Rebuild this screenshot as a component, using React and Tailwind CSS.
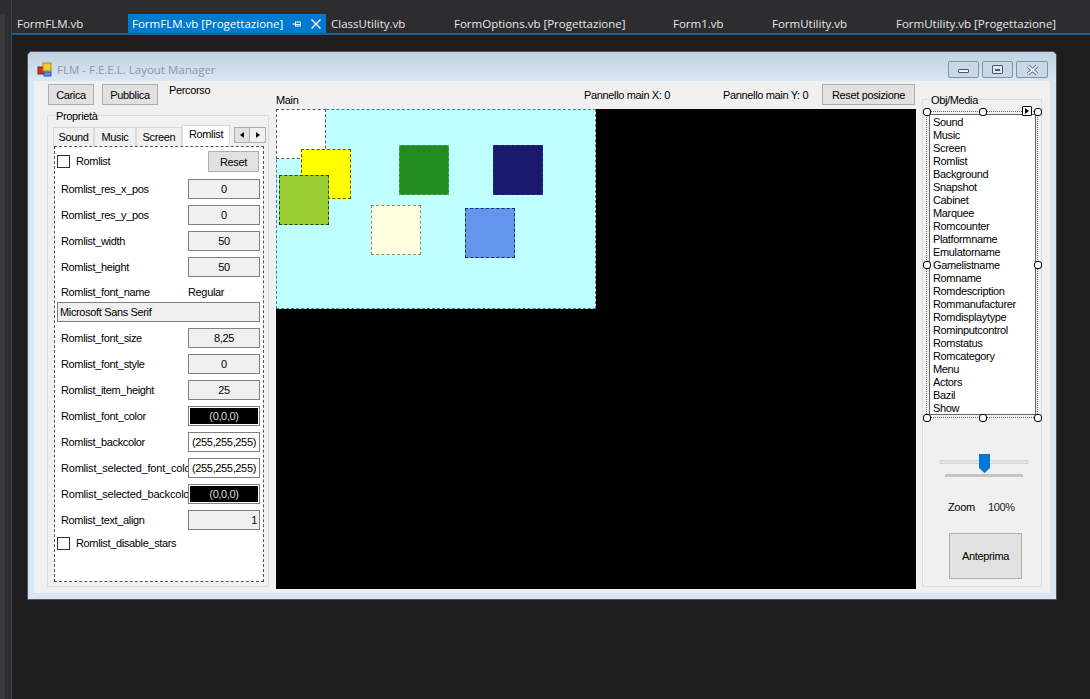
import React from 'react';

const tabs = [
  { label: 'FormFLM.vb', w: 'w-[116px]' },
  { label: 'FormFLM.vb [Progettazione]', w: 'w-[198px]', active: true },
  { label: 'ClassUtility.vb', w: 'w-[123px]' },
  { label: 'FormOptions.vb [Progettazione]', w: 'w-[219px]' },
  { label: 'Form1.vb', w: 'w-[99px]' },
  { label: 'FormUtility.vb', w: 'w-[124px]' },
  { label: 'FormUtility.vb [Progettazione]', w: 'w-[199px]' },
];

const media = [
  'Sound', 'Music', 'Screen', 'Romlist', 'Background', 'Snapshot', 'Cabinet', 'Marquee', 'Romcounter',
  'Platformname', 'Emulatorname', 'Gamelistname', 'Romname', 'Romdescription', 'Rommanufacturer',
  'Romdisplaytype', 'Rominputcontrol', 'Romstatus', 'Romcategory', 'Menu', 'Actors', 'Bazil', 'Show',
];

const squares = [
  { c: 'left-0 top-0 bg-white border-[#555555]' },
  { c: 'left-[25px] top-[40px] bg-[#ffff00] border-[#555500]' },
  { c: 'left-[3px] top-[66px] bg-[#9acd32] border-[#2f4010]' },
  { c: 'left-[123px] top-[36px] bg-[#228b22] border-[#4fb04f]' },
  { c: 'left-[217px] top-[36px] bg-[#191970] border-[#2b2b90]' },
  { c: 'left-[95px] top-[96px] bg-[#ffffe0] border-[#8a8a60]' },
  { c: 'left-[189px] top-[99px] bg-[#6495ed] border-[#12306a]' },
];

const handles = [
  'left-[-4px] top-[-4px]', 'left-[52px] top-[-4px]', 'left-[107px] top-[-4px]',
  'left-[-4px] top-[149px]', 'left-[107px] top-[149px]',
  'left-[-4px] top-[302px]', 'left-[52px] top-[302px]', 'left-[107px] top-[302px]',
];

const Btn = ({ className, children }) => (
  <div className={`flex items-center justify-center pt-px bg-[#e1e1e1] border border-[#adadad] ${className}`}>{children}</div>
);

const Check = () => <div className="w-[13px] h-[13px] border border-[#333333] bg-white shrink-0" />;

const Field = ({ children, variant }) => {
  let cls = 'bg-[#f0f0f0] text-black justify-center';
  if (variant === 'white') cls = 'bg-white text-black justify-center';
  if (variant === 'black') cls = 'bg-black text-[#dddddd] justify-center shadow-[inset_0_0_0_1px_white]';
  if (variant === 'right') cls = 'bg-[#f0f0f0] text-black justify-end pr-[2px]';
  return (
    <div className={`w-[72px] h-[20px] shrink-0 flex items-center border border-[#808080] whitespace-nowrap ${cls}`}>{children}</div>
  );
};

const Row = ({ label, children, variant, wide }) => (
  <div className="flex items-center h-[20px]">
    <div className={`w-[127px] ml-[6px] shrink-0 overflow-hidden whitespace-nowrap ${wide ? 'tracking-[-0.2px]' : ''}`}>{label}</div>
    <Field variant={variant}>{children}</Field>
  </div>
);

const PropTab = ({ className, children }) => (
  <div className={`h-[19px] flex items-center justify-center bg-[#f0f0f0] border border-b-0 border-[#d9d9d9] ${className}`}>{children}</div>
);

export default function App() {
  return (
    <div className="w-[1090px] h-[699px] flex bg-[#2d2d30] overflow-hidden font-['Liberation_Sans',sans-serif] text-[11px] tracking-[-0.35px] text-black">
      {/* side strip */}
      <div className="w-[5px] flex flex-col">
        <div className="h-[14px] bg-[#2d2d30]" />
        <div className="flex-1 bg-[#3a3a3e]" />
      </div>
      <div className="w-[6px] bg-[#2d2d30]" />
      <div className="w-px bg-[#3f3f46]" />

      <div className="flex-1 flex flex-col min-w-0">
        {/* document tabs */}
        <div className="h-[33px] pt-[14px] flex shrink-0 bg-[#2d2d30] font-['Open_Sans',sans-serif] text-[11.5px] tracking-normal text-[#e8e8e8]">
          {tabs.map((t) => (
            <div
              key={t.label}
              className={`${t.w} shrink-0 h-[19px] flex items-center whitespace-nowrap ${t.active ? 'pl-[4px] bg-[#007acc] text-white' : 'pl-[5px]'}`}
            >
              {t.label}
              {t.active && (
                <span className="flex items-center ml-auto">
                  <svg width="10" height="10" viewBox="0 0 10 10" className="mr-[9px]" fill="none" stroke="white">
                    <path d="M0.5 5h3M3.5 2.5v5M3.5 3h5v4h-5M3.5 5.5h5" />
                  </svg>
                  <svg width="10" height="10" viewBox="0 0 10 10" className="mr-[5px]" fill="none" stroke="white" strokeWidth="1.4">
                    <path d="M0.5 0.5l9 9M9.5 0.5l-9 9" />
                  </svg>
                </span>
              )}
            </div>
          ))}
        </div>
        <div className="h-[2px] bg-[#1c6196] shrink-0" />

        <div className="flex-1 bg-[#1e1e1e] pl-[15px] pt-[16px]">
          {/* form window */}
          <div className="w-[1030px] h-[549px] border border-[#50585f] rounded-t-[5px] bg-[#d9e6f3] flex flex-col">
            <div className="h-[29px] shrink-0 px-[9px] flex items-center bg-gradient-to-b from-[#bfd1e1] to-[#dbe7f3] rounded-t-[5px]">
              <svg width="16" height="16" viewBox="0 0 16 16" className="shrink-0 mt-[7px]">
                <rect x="1" y="5" width="6" height="7" fill="#c0392b" stroke="#7a1f14" />
                <rect x="6" y="1" width="8" height="8" fill="#f5c83a" stroke="#a98a1c" />
                <rect x="7" y="10" width="7" height="4" fill="#5b8fd9" stroke="#2f5a9e" />
              </svg>
              <span className="ml-[4px] mt-[7px] font-['Open_Sans',sans-serif] text-[11.5px] tracking-normal text-[#8c98a4] whitespace-nowrap">FLM - F.E.E.L. Layout Manager</span>
              <div className="ml-auto flex gap-[3px] mt-[6px] mr-[-1px]">
                <div className="w-[31px] h-[17px] rounded-[2px] border border-[#7f93a8] bg-[#c9d8e7] flex items-center justify-center">
                  <div className="w-[11px] h-[4px] mt-[3px] bg-[#eef3f8] border border-[#4a5663] rounded-[1px]" />
                </div>
                <div className="w-[31px] h-[17px] rounded-[2px] border border-[#7f93a8] bg-[#c9d8e7] flex items-center justify-center">
                  <div className="w-[11px] h-[9px] bg-[#dfe8f1] border border-[#4a5663] rounded-[1px] flex items-center justify-center">
                    <div className="w-[5px] h-[2px] bg-[#4a5663]" />
                  </div>
                </div>
                <div className="w-[32px] h-[17px] rounded-[2px] border border-[#7f93a8] bg-[#c9d8e7] flex items-center justify-center">
                  <svg width="13" height="10" viewBox="0 0 13 10">
                    <path d="M2 1l9 8M11 1l-9 8" stroke="#4a5663" strokeWidth="3.4" />
                    <path d="M2 1l9 8M11 1l-9 8" stroke="#eef3f8" strokeWidth="1.8" />
                  </svg>
                </div>
              </div>
            </div>

            {/* client area */}
            <div className="mx-[6px] h-[512px] bg-[#f0f0f0] flex pl-[13px]">
              {/* left column */}
              <div className="w-[223px] shrink-0 pt-[3px]">
                <div className="flex h-[21px]">
                  <Btn className="w-[46px] h-[21px] ml-px">Carica</Btn>
                  <Btn className="w-[56px] h-[21px] ml-[8px]">Pubblica</Btn>
                  <span className="ml-[11px] mt-[-2px]">Percorso</span>
                </div>
                <div className="relative mt-[10px] w-[222px] h-[472px] border border-[#dcdcdc] pt-[9px] pl-[5px]">
                  <span className="absolute left-[7px] top-[-8px] px-px bg-[#f0f0f0]">Proprietà</span>
                  <div className="flex h-[21px] items-end">
                    <PropTab className="w-[41px]">Sound</PropTab>
                    <PropTab className="w-[42px]">Music</PropTab>
                    <PropTab className="w-[46px]">Screen</PropTab>
                    <div className="w-[48px] h-[21px] pb-[3px] flex items-center justify-center bg-white border border-b-0 border-[#d9d9d9]">Romlist</div>
                    <div className="flex self-start mt-[2px] ml-[4px]">
                      <div className="w-[16px] h-[16px] bg-[#e1e1e1] border border-[#adadad] flex items-center justify-center">
                        <div className="border-y-[3px] border-y-transparent border-r-[4px] border-r-black" />
                      </div>
                      <div className="w-[16px] h-[16px] bg-[#f0f0f0] border border-l-0 border-[#adadad] flex items-center justify-center">
                        <div className="border-y-[3px] border-y-transparent border-l-[4px] border-l-black" />
                      </div>
                    </div>
                  </div>

                  {/* Romlist tab page */}
                  <div className="ml-px w-[210px] h-[436px] border border-dashed border-[#555555] bg-white pt-[4px]">
                    <div className="flex items-center h-[21px] pl-[2px]">
                      <Check />
                      <span className="ml-[6px]">Romlist</span>
                      <Btn className="w-[51px] h-[21px] ml-auto mr-[4px]">Reset</Btn>
                    </div>
                    <div className="flex flex-col gap-[6px] mt-[7px]">
                      <Row label="Romlist_res_x_pos">0</Row>
                      <Row label="Romlist_res_y_pos">0</Row>
                      <Row label="Romlist_width">50</Row>
                      <Row label="Romlist_height">50</Row>
                      <div>
                        <div className="flex items-center h-[19px] pl-[6px]">
                          <span className="w-[127px] shrink-0">Romlist_font_name</span>
                          <span>Regular</span>
                        </div>
                        <div className="ml-[2px] w-[203px] h-[20px] pl-[2px] flex items-center border border-[#808080] bg-[#f0f0f0]">Microsoft Sans Serif</div>
                      </div>
                      <Row label="Romlist_font_size">8,25</Row>
                      <Row label="Romlist_font_style">0</Row>
                      <Row label="Romlist_item_height">25</Row>
                      <Row label="Romlist_font_color" variant="black">(0,0,0)</Row>
                      <Row label="Romlist_backcolor" variant="white">(255,255,255)</Row>
                      <Row label="Romlist_selected_font_color" variant="white" wide>(255,255,255)</Row>
                      <Row label="Romlist_selected_backcolor" variant="black" wide>(0,0,0)</Row>
                      <Row label="Romlist_text_align" variant="right">1</Row>
                    </div>
                    <div className="flex items-center h-[13px] mt-[7px] pl-[2px]">
                      <Check />
                      <span className="ml-[6px]">Romlist_disable_stars</span>
                    </div>
                  </div>
                </div>
              </div>

              {/* center column */}
              <div className="w-[640px] ml-[6px] shrink-0 pt-[3px]">
                <div className="flex h-[25px]">
                  <span className="w-[308px] mt-[8px]">Main</span>
                  <span className="w-[139px] mt-[3px]">Pannello main X: 0</span>
                  <span className="w-[99px] mt-[3px]">Pannello main Y: 0</span>
                  <Btn className="w-[93px] h-[21px]">Reset posizione</Btn>
                </div>
                <div className="relative h-[480px] bg-black overflow-hidden">
                  <div className="absolute left-0 top-0 w-[320px] h-[200px] bg-[#bfffff] border border-dashed border-[#2a8c8c]" />
                  {squares.map((s) => (
                    <div key={s.c} className={`absolute w-[50px] h-[50px] border border-dashed ${s.c}`} />
                  ))}
                </div>
              </div>

              {/* right column */}
              <div className="relative w-[120px] h-[488px] ml-[6px] mt-[18px] shrink-0 border border-[#dcdcdc] pt-[11px] pl-[3px]">
                <span className="absolute left-[7px] top-[-8px] px-px bg-[#f0f0f0]">Obj/Media</span>
                <div className="relative w-[112px] h-[307px] border border-dotted border-[#666666] pl-[2px] pt-[2px]">
                  <div className="w-[107px] h-[301px] border border-[#666666] bg-white pl-[3px] pt-px">
                    {media.map((m) => (
                      <div key={m} className="h-[13px] leading-[13px]">{m}</div>
                    ))}
                  </div>
                  {handles.map((h) => (
                    <div key={h} className={`absolute w-[8px] h-[8px] rounded-[3px] bg-white border border-black ${h}`} />
                  ))}
                  <div className="absolute left-[95px] top-[-6px] w-[10px] h-[10px] rounded-[1px] bg-white border border-black flex items-center justify-center">
                    <div className="border-y-[3px] border-y-transparent border-l-[4px] border-l-black" />
                  </div>
                </div>

                {/* zoom slider */}
                <div className="relative w-[88px] h-[4px] ml-[14px] mt-[42px] bg-[#e6e6e6] border border-[#d6d6d6]">
                  <svg width="11" height="19" viewBox="0 0 11 19" className="absolute left-[38px] top-[-7px]">
                    <path d="M0 0h11v14l-5.5 5L0 14z" fill="#0078d7" />
                  </svg>
                </div>
                <div className="w-[78px] h-[3px] ml-[19px] mt-[10px] bg-[#c4c4c4]" />
                <div className="flex ml-[22px] mt-[24px] h-[13px] leading-[13px]">
                  <span className="w-[40px]">Zoom</span>
                  <span className="text-[#222222]">100%</span>
                </div>
                <Btn className="w-[73px] h-[46px] ml-[23px] mt-[19px]">Anteprima</Btn>
              </div>
            </div>
          </div>
        </div>
      </div>
    </div>
  );
}
